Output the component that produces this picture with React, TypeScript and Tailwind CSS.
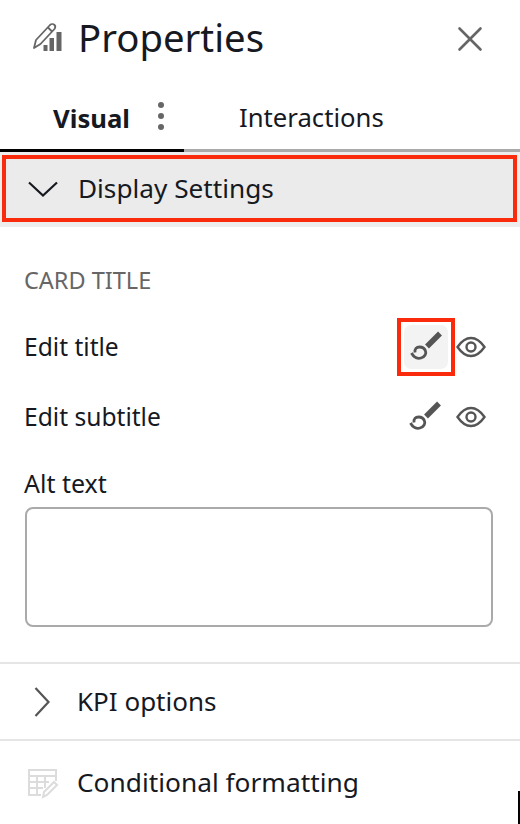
import { X } from "lucide-react";

function BrushIcon() {
  return (
    <svg width="32" height="32" viewBox="0 0 32 32" fill="none" stroke="#555">
      <path d="M17 15.5 L30 2.5" strokeWidth="5.5" />
      <path
        d="M1.5 22 C4 27 8 28 11 27 C15 26 16.5 22.5 15.5 20 C14.5 17 12 16 9.5 16 C6.5 16 4.5 18 5 21.5"
        strokeWidth="2.8"
      />
    </svg>
  );
}

function EyeIcon() {
  return (
    <svg width="32" height="24" viewBox="0 0 32 24" fill="none" stroke="#555" strokeWidth="2.4">
      <path d="M2.5 12 C7 5.5 11 3 16 3 C21 3 25 5.5 29.5 12 C25 18.5 21 21 16 21 C11 21 7 18.5 2.5 12 Z" />
      <circle cx="16" cy="12" r="4.5" />
    </svg>
  );
}

function PropertiesIcon() {
  return (
    <svg width="32" height="32" viewBox="0 0 32 32" fill="none">
      <path
        d="M2 27 L4 19 L18 4 C19.5 2.5 21.5 3 22.5 4 C23.5 5 23.5 6.5 22.5 8 L8.5 23 Z M16 6.5 L20.5 11"
        stroke="#666"
        strokeWidth="1.8"
        strokeLinejoin="round"
      />
      <rect x="11.5" y="24" width="4" height="6" fill="#666" />
      <rect x="17.5" y="17" width="4.5" height="13" fill="#666" />
      <rect x="24.5" y="11" width="5" height="19" fill="#666" />
    </svg>
  );
}

function FormatIcon() {
  return (
    <svg width="32" height="32" viewBox="0 0 32 32" fill="none" stroke="#dcdcdc" strokeWidth="2">
      <path d="M14 28 H2 V3 H29 V14" />
      <path d="M2 9 H29 M2 15 H22 M2 21 H16 M10 9 V28 M18 9 V21" />
      <path d="M16 30 L17 25 L27 15 L30 18 L20 28 Z" fill="#fff" />
    </svg>
  );
}

export default function App() {
  return (
    <div className="relative h-[824px] w-[520px] overflow-hidden bg-white font-['Noto_Sans',sans-serif] text-[#16191f]">
      <header className="flex h-[74px] items-center pl-[32px] pr-[29px]">
        <PropertiesIcon />
        <h1 className="ml-[14px] text-[38.3px] leading-none">Properties</h1>
        <X className="ml-auto mt-[3px] text-[#666]" size={42} strokeWidth={1.5} />
      </header>

      <div className="flex h-[78px] border-b-[3px] border-[#aaa]">
        <div className="-mb-[3px] flex w-[184px] items-center border-b-[3px] border-black pl-[53px] pt-[16px]">
          <span className="text-[25.7px] font-bold">Visual</span>
          <span className="-mt-[8px] ml-[28px] flex flex-col gap-[5px]">
            <i className="size-[6px] rounded-full bg-[#666]" />
            <i className="size-[6px] rounded-full bg-[#666]" />
            <i className="size-[6px] rounded-full bg-[#666]" />
          </span>
        </div>
        <div className="flex items-center pl-[55px] pt-[13px] text-[25.7px]">Interactions</div>
      </div>

      <div className="bg-[#ededed] pb-[5px] pl-[2px] pr-[3px] pt-[3px]">
        <div className="flex h-[67px] items-center border-[4px] border-[#fa2a0c] bg-[#ebebeb] pl-[22px]">
          <svg width="30" height="16" viewBox="0 0 30 16" fill="none" stroke="#16191f" strokeWidth="2.2">
            <path d="M1 1.5 L15 14.5 L29 1.5" />
          </svg>
          <span className="ml-[20px] text-[26.2px]">Display Settings</span>
        </div>
      </div>

      <section className="pl-[24px] pr-[27px]">
        <h2 className="mt-[37px] text-[23.5px] leading-[32px] text-[#666]">CARD TITLE</h2>
        <div className="mt-[21px] flex h-[60px] items-center">
          <span className="text-[24.6px]">Edit title</span>
          <div className="ml-auto flex items-center">
            <div className="flex size-[58px] items-center justify-center border-[4px] border-[#fa2a0c] bg-white">
              <div className="flex size-[44px] items-center justify-center rounded-[7px] bg-[#f3f3f3]">
                <BrushIcon />
              </div>
            </div>
            <div className="mr-[6px]"><EyeIcon /></div>
          </div>
        </div>
        <div className="mt-[10px] flex h-[60px] items-center">
          <span className="text-[24.6px]">Edit subtitle</span>
          <div className="ml-auto flex items-center gap-[14px] pr-[6px]">
            <BrushIcon />
            <EyeIcon />
          </div>
        </div>
        <div className="mt-[20px] text-[25px] leading-[32px]">Alt text</div>
        <div className="ml-[1px] mt-[8px] h-[120px] w-[468px] rounded-[8px] border-[2px] border-[#aaa]" />
      </section>

      <div className="mt-[35px] flex h-[77px] items-center border-t-[2px] border-[#e5e5e5] pl-[34px]">
        <svg width="16" height="30" viewBox="0 0 16 30" fill="none" stroke="#555" strokeWidth="2.2">
          <path d="M1.5 1 L14.5 15 L1.5 29" />
        </svg>
        <span className="ml-[27px] text-[26px]">KPI options</span>
      </div>
      <div className="flex h-[83px] items-center border-t-[2px] border-[#e5e5e5] pl-[27px] pt-[2px]">
        <FormatIcon />
        <span className="ml-[18px] text-[26.3px]">Conditional formatting</span>
      </div>

      <div className="absolute bottom-0 right-0 h-[33px] w-[2px] bg-black" />
    </div>
  );
}
